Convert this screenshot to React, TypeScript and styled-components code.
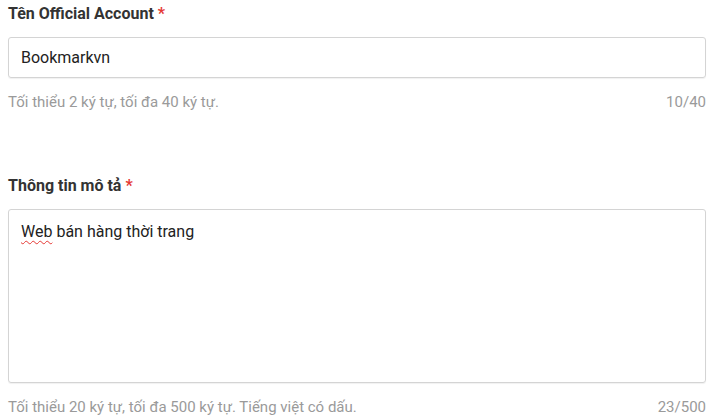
import React from "react";
import styled, { createGlobalStyle } from "styled-components";

const Global = createGlobalStyle`
  html, body { margin: 0; padding: 0; background: #fff; }
  body { font-family: Roboto, "Noto Sans", Arial, sans-serif; }
`;

const Page = styled.div`
  display: flex;
  flex-direction: column;
  padding: 4px 3px 0 8px;
`;

const Field = styled.div<{ $gapTop?: number }>`
  display: flex;
  flex-direction: column;
  margin-top: ${(p) => p.$gapTop ?? 0}px;
`;

const Label = styled.div`
  font-size: 16px;
  font-weight: 700;
  line-height: 20px;
  color: #333;
  margin-bottom: 13px;
`;

const Star = styled.span`
  color: #e53935;
  margin-left: 4px;
`;

const Box = styled.div<{ $h: number; $align: "center" | "flex-start" }>`
  box-sizing: border-box;
  height: ${(p) => p.$h}px;
  border: 1px solid #d4d4d4;
  border-radius: 3px;
  box-shadow: 0 1px 1px rgba(0, 0, 0, 0.06);
  display: flex;
  align-items: ${(p) => p.$align};
  padding: ${(p) => (p.$align === "center" ? "0 12px" : "12px 12px")};
  font-size: 16px;
  line-height: 20px;
  color: #222;
`;

const Wavy = styled.span`
  text-decoration: underline wavy #e53935;
  text-decoration-thickness: 1px;
  text-underline-offset: 3px;
`;

const Helper = styled.div`
  display: flex;
  justify-content: space-between;
  margin-top: 15px;
  font-size: 15px;
  line-height: 18px;
  color: #9a9a9a;
`;

export default function App() {
  return (
    <>
      <Global />
      <Page>
        <Field>
          <Label>
            Tên Official Account<Star>*</Star>
          </Label>
          <Box $h={41} $align="center">Bookmarkvn</Box>
          <Helper>
            <span>Tối thiểu 2 ký tự, tối đa 40 ký tự.</span>
            <span>10/40</span>
          </Helper>
        </Field>
        <Field $gapTop={65}>
          <Label>
            Thông tin mô tả<Star>*</Star>
          </Label>
          <Box $h={174} $align="flex-start">
            <span>
              <Wavy>Web</Wavy> bán hàng thời trang
            </span>
          </Box>
          <Helper>
            <span>Tối thiểu 20 ký tự, tối đa 500 ký tự. Tiếng việt có dấu.</span>
            <span>23/500</span>
          </Helper>
        </Field>
      </Page>
    </>
  );
}
